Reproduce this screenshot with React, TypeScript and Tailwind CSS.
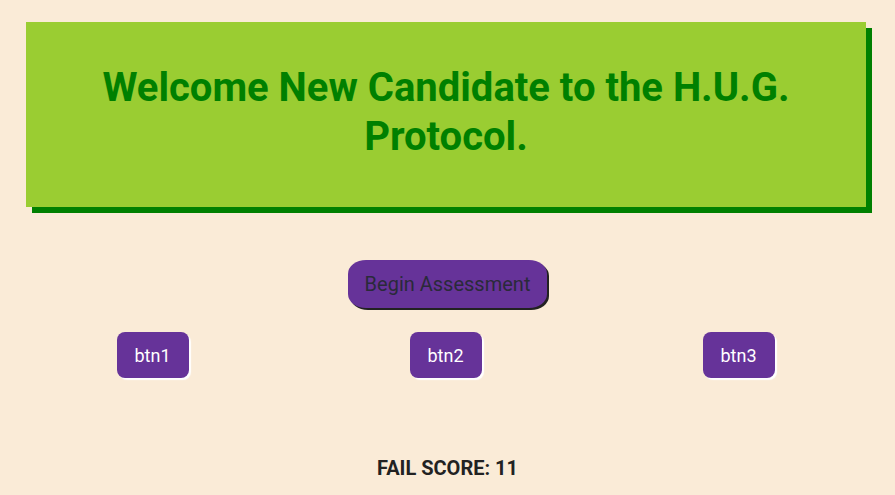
export default function App() {
  return (
    <div className="min-h-[495px] bg-[#faebd7] font-['Roboto',sans-serif] pt-[22px]">
      <div className="ml-[26px] w-[840px] h-[185px] bg-[#9acd32] shadow-[6px_6px_0_#008000] pt-[41px] px-12">
        <h1 className="text-[40px] leading-[49px] font-bold text-[#008000] text-center">
          Welcome New Candidate to the H.U.G. Protocol.
        </h1>
      </div>
      <div className="flex justify-center mt-[53px]">
        <button className="h-[48px] px-[17px] rounded-[18px/14px] bg-[#663399] text-[#2a2a3a] text-[20px] shadow-[2px_2px_0_#222]">
          Begin Assessment
        </button>
      </div>
      <div className="grid grid-cols-3 ml-[6px] w-[879px] mt-[24px]">
        {["btn1", "btn2", "btn3"].map((b) => (
          <div key={b} className="flex justify-center">
            <button className="h-[46px] w-[72px] rounded-[8px] bg-[#663399] text-white text-[18px] shadow-[2px_2px_1px_#ffffff]">
              {b}
            </button>
          </div>
        ))}
      </div>
      <p className="text-center mt-[75px] text-[20px] font-bold text-[#222]">FAIL SCORE: 11</p>
    </div>
  );
}
